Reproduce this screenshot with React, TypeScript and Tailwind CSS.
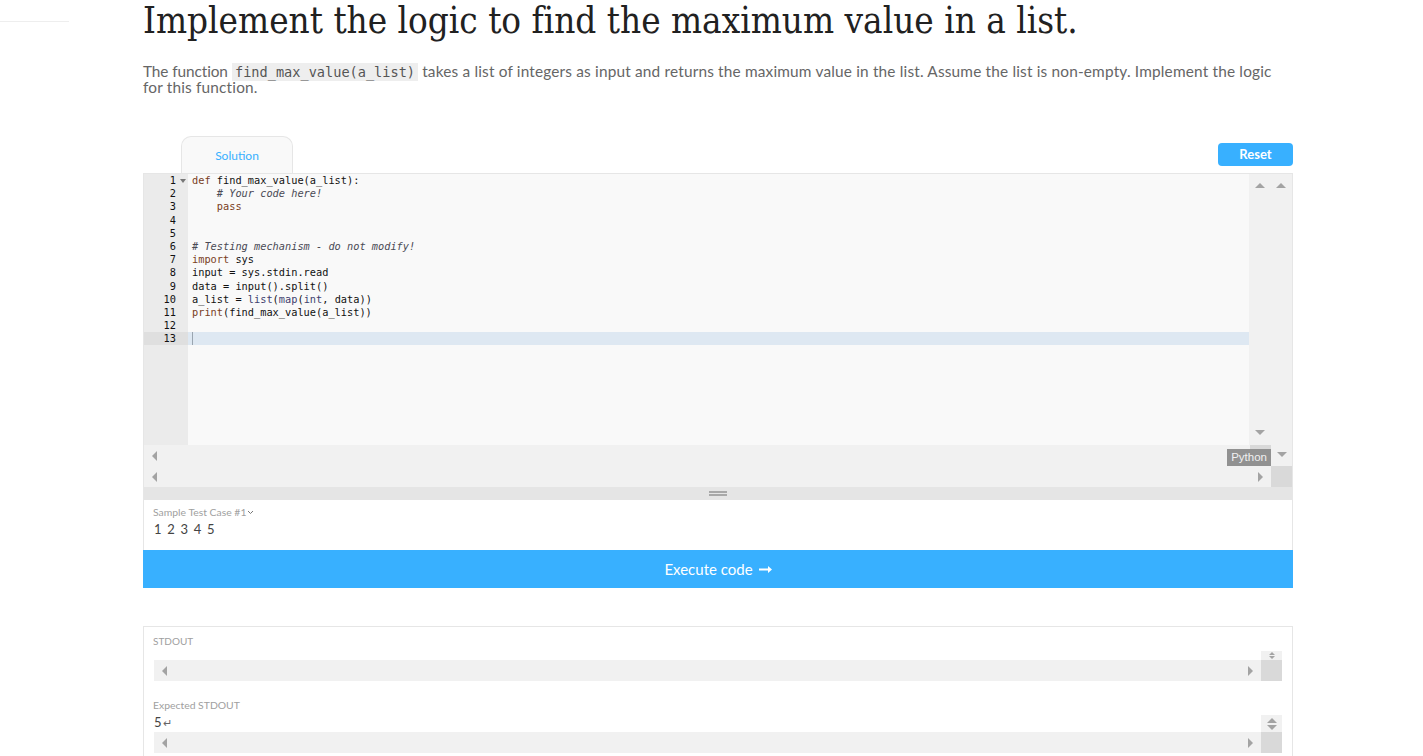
import React from 'react';

const sans = 'font-["Lato","Noto_Sans",sans-serif]';

const Tri = ({ dir, className = '' }: { dir: 'up' | 'down' | 'left' | 'right'; className?: string }) => {
  const points = {
    up: '5,0 10,5 0,5',
    down: '0,0 10,0 5,5',
    left: '5,0 5,10 0,5',
    right: '0,0 5,5 0,10',
  }[dir];
  const horizontal = dir === 'up' || dir === 'down';
  return (
    <svg
      width={horizontal ? 10 : 5}
      height={horizontal ? 5 : 10}
      viewBox={horizontal ? '0 0 10 5' : '0 0 5 10'}
      className={`block shrink-0 ${className}`}
    >
      <polygon points={points} fill="#a3a3a3" />
    </svg>
  );
};

const K = ({ children }: { children: React.ReactNode }) => <span className="text-[#7a3e1d]">{children}</span>;
const B = ({ children }: { children: React.ReactNode }) => <span className="text-[#3f3f6f]">{children}</span>;
const C = ({ children }: { children: React.ReactNode }) => <span className="italic text-[#4a4a55]">{children}</span>;

const codeLines: React.ReactNode[] = [
  <><K>def</K> find_max_value(a_list):</>,
  <>    <C># Your code here!</C></>,
  <>    <K>pass</K></>,
  '',
  '',
  <C># Testing mechanism - do not modify!</C>,
  <><K>import</K> sys</>,
  <>input = sys.stdin.read</>,
  <>data = input().split()</>,
  <>a_list = <B>list</B>(<B>map</B>(<B>int</B>, data))</>,
  <><K>print</K>(find_max_value(a_list))</>,
  '',
  '',
];

const HBar = ({ className = '' }: { className?: string }) => (
  <div className={`flex h-[21px] items-center justify-between bg-[#f1f1f1] px-[8px] ${className}`}>
    <Tri dir="left" />
    <Tri dir="right" />
  </div>
);

export default function App() {
  return (
    <div className={`flex h-[756px] overflow-hidden bg-white ${sans}`}>
      <div className="w-[143px] shrink-0 pt-[21px]">
        <div className="h-px w-[69px] bg-[#eeeeee]" />
      </div>

      <main className="w-[1150px] shrink-0">
        <h1 className='h-[40px] text-[36.5px] leading-[41px] font-normal whitespace-nowrap text-[#212121] font-["DejaVu_Serif",serif] font-stretch-condensed [font-variant-ligatures:none]'>
          Implement the logic to find the maximum value in a list.
        </h1>

        <p className="mt-[23px] w-[1140px] text-[15.4px] leading-[16px] tracking-[0.17px] text-[#666666]">
          <span className="tracking-[-0.1px]">The function</span>{' '}
          <code className='bg-[#eeeeee] px-[3px] py-[1px] font-["DejaVu_Sans_Mono",monospace] text-[13.6px] leading-[0] tracking-normal text-[#555555]'>find_max_value(a_list)</code>{' '}
          takes a list of integers as input and returns the maximum value in the list. Assume the list is non-empty. Implement the logic for this function.
        </p>

        {/* tabs */}
        <div className="mt-[41px] flex h-[37px] items-end justify-between">
          <div className="ml-[38px] flex h-[37px] w-[112px] items-center justify-center rounded-t-[10px] border border-b-0 border-[#e6e6e6] bg-[#f9f9f9] pt-[1px] text-[12px] text-[#38b0ff]">
            Solution
          </div>
          <button className="mb-[7px] h-[23px] w-[75px] rounded-[4px] bg-[#38b0ff] text-[13px] font-bold text-white">
            Reset
          </button>
        </div>

        {/* editor */}
        <div className="border-x border-[#e6e6e6]">
          <div className="flex h-[272px] border-t border-[#e6e6e6]">
            <div className='w-[44px] shrink-0 bg-[#ebebeb] font-["DejaVu_Sans_Mono",monospace] text-[10.3px] leading-[13.2px] text-[#111111]'>
              {codeLines.map((_, i) => (
                <div key={i} className={`relative h-[13.2px] pr-[12px] text-right ${i === 12 ? 'bg-[#dfdfdf]' : ''}`}>
                  {i + 1}
                  {i === 0 && <span className="absolute top-[5px] right-[2px] h-0 w-0 border-x-[3px] border-t-[4px] border-x-transparent border-t-[#777777]" />}
                </div>
              ))}
            </div>
            <pre className='min-w-0 flex-1 bg-[#f9f9f9] font-["DejaVu_Sans_Mono",monospace] text-[10.3px] leading-[13.2px] text-[#111111]'>
              {codeLines.map((line, i) => (
                <div key={i} className={`h-[13.2px] pl-[4px] ${i === 12 ? 'bg-[#dee8f2]' : ''}`}>
                  {i === 12 ? <span className="inline-block h-[13px] w-px bg-[#9aa5b0] align-top" /> : line}
                </div>
              ))}
            </pre>
            <div className="flex w-[43px] shrink-0 flex-col bg-[#f1f1f1] pt-[9px]">
              <div className="flex gap-[11px] pl-[6px]">
                <Tri dir="up" />
                <Tri dir="up" />
              </div>
              <Tri dir="down" className="mt-auto mb-[10px] ml-[6px]" />
            </div>
          </div>

          <div className="relative">
            <div className="flex h-[21px] items-center bg-[#f1f1f1] pl-[8px]">
              <Tri dir="left" />
            </div>
            <div className="flex h-[21px] bg-[#f1f1f1] pl-[8px]">
              <div className="flex flex-1 items-center justify-between pr-[8px]">
                <Tri dir="left" />
                <Tri dir="right" />
              </div>
              <div className="w-[21px] bg-[#d9d9d9]" />
            </div>
            <span className="absolute top-[4px] right-[21px] bg-[#919191] px-[4px] text-[11.5px] leading-[17px] text-[#f0f0f0] font-['Liberation_Sans',sans-serif]">
              Python
            </span>
            <Tri dir="down" className="absolute top-[7px] right-[5px]" />
            <div className="absolute top-0 right-[21px] h-[4px] w-[21px] bg-[#d9d9d9]" />
          </div>

          <div className="flex h-[13px] flex-col items-center justify-center gap-[1px] bg-[#e5e5e5]">
            <div className="h-[2px] w-[18px] bg-[#a8a8a8]" />
            <div className="h-[2px] w-[18px] bg-[#a8a8a8]" />
          </div>

          <div className="h-[50px] px-[9px] pt-[5px]">
            <div className="flex items-center text-[10.4px] leading-[14px] text-[#a0a0a0]">
              Sample Test Case #1
              <svg width="7" height="5" viewBox="0 0 7 5" className="ml-[1px]">
                <path d="M1 1l2.5 2.5L6 1" fill="none" stroke="#777777" strokeWidth="1" />
              </svg>
            </div>
            <div className="mt-[2px] ml-[1px] text-[13px] leading-[17px] tracking-[1.2px] text-[#444444]">1 2 3 4 5</div>
          </div>
        </div>

        <button className="flex h-[38px] w-full items-center justify-center gap-[6px] bg-[#38b0ff] text-[15px] text-white">
          Execute code
          <svg width="13" height="7" viewBox="0 0 13 7">
            <path d="M0 2.5h9V0l4 3.5L9 7V4.5H0z" fill="#ffffff" />
          </svg>
        </button>

        {/* output */}
        <div className="mt-[38px] border border-[#e6e6e6] px-[10px] pt-[7px] pb-[20px]">
          <div className="-ml-px text-[10px] leading-[14px] text-[#a0a0a0]">STDOUT</div>
          <div className="mt-[3px] flex justify-end pr-0">
            <div className="flex h-[9px] w-[21px] items-center justify-center bg-[#f1f1f1]">
              <svg width="6" height="7" viewBox="0 0 6 7">
                <path d="M3 0l3 3H0zM3 7L0 4h6z" fill="#a3a3a3" />
              </svg>
            </div>
          </div>
          <div className="flex">
            <HBar className="flex-1" />
            <div className="w-[21px] bg-[#d9d9d9]" />
          </div>

          <div className="mt-[17px] -ml-px text-[10.4px] leading-[14px] text-[#a0a0a0]">Expected STDOUT</div>
          <div className="mt-[3px] flex h-[17px] items-start justify-between">
            <span className="-mt-[1px] flex items-center gap-[1px] text-[13px] leading-[17px] text-[#444444]">
              5
              <span className="text-[11px] leading-[17px] text-[#666666]">↵</span>
            </span>
            <div className="flex h-[17px] w-[21px] flex-col items-center justify-center gap-[2px] bg-[#f1f1f1]">
              <Tri dir="up" />
              <Tri dir="down" />
            </div>
          </div>
          <div className="flex">
            <HBar className="flex-1" />
            <div className="w-[21px] bg-[#d9d9d9]" />
          </div>
        </div>
      </main>
    </div>
  );
}
